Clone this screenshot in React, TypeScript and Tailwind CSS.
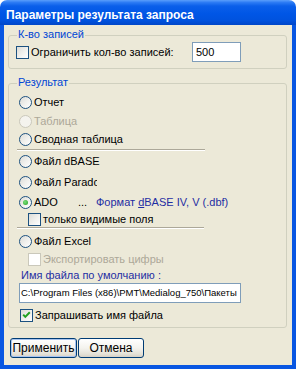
import React from "react";

function CheckBox({ checked = false, disabled = false }: { checked?: boolean; disabled?: boolean }) {
  return (
    <span
      className={
        disabled
          ? "relative flex h-[13px] w-[13px] shrink-0 border border-[#CAC8BB] bg-white"
          : "relative flex h-[13px] w-[13px] shrink-0 border border-[#1C5180] bg-[linear-gradient(135deg,#DCDCD7_0%,#F1F1EE_55%,#FFFFFF_100%)]"
      }
    >
      {checked && (
        <svg width="11" height="11" viewBox="0 0 11 11" className="absolute left-0 top-0">
          <path d="M2.2 4.6 L4.3 6.9 L8.8 2.3" stroke="#21A121" strokeWidth="2" fill="none" />
        </svg>
      )}
    </span>
  );
}

function Radio({ checked = false, disabled = false }: { checked?: boolean; disabled?: boolean }) {
  return (
    <span
      className={
        disabled
          ? "flex h-[13px] w-[13px] shrink-0 items-center justify-center rounded-full border border-[#CAC8BB] bg-[#F4F3EE]"
          : "flex h-[13px] w-[13px] shrink-0 items-center justify-center rounded-full border border-[#1C5180] bg-[linear-gradient(135deg,#DCDCD7_0%,#F1F1EE_55%,#FFFFFF_100%)]"
      }
    >
      {checked && (
        <span className="h-[5px] w-[5px] rounded-full bg-[radial-gradient(circle_at_40%_40%,#7BE07B_0%,#21A121_100%)]" />
      )}
    </span>
  );
}

export default function App() {
  return (
    <div className="h-[369px] w-[296px] bg-white font-['Liberation_Sans',Arial,sans-serif] text-[11px] text-black">
      <div className="flex h-[25px] items-start rounded-t-[7px] bg-[linear-gradient(180deg,#5A9EFB_0%,#2C7BF4_10%,#0A5FEA_24%,#0056E6_55%,#0052DE_82%,#0046C8_100%)] pl-[6px] pt-[8px]">
        <span className="text-[12px] font-bold leading-[14px] text-white">Параметры результата запроса</span>
      </div>
      <div className="flex h-[344px] flex-col bg-[#0856E2] px-[4px] pb-[4px]">
        <div className="flex h-[340px] flex-col bg-[#ECE9D8] pl-[4px] pr-[5px]">
          {/* Group 1 */}
          <div className="relative mt-[10px] flex h-[34px] items-center rounded-[3px] border border-[#D0D0BF] pl-[7px]">
            <span className="absolute left-[8px] top-[-8px] bg-[#ECE9D8] px-[1px] leading-[12px] text-[#0046D5]">
              К-во записей
            </span>
            <CheckBox />
            <span className="ml-[2px] w-[161px] whitespace-nowrap">Ограничить кол-во записей:</span>
            <div className="flex h-[20px] w-[49px] items-center border border-[#7F9DB9] bg-white pl-[3px]">500</div>
          </div>

          {/* Group 2 */}
          <div className="relative mt-[14px] flex flex-col rounded-[3px] border border-[#D0D0BF] pb-[3px] pt-[9px]">
            <span className="absolute left-[8px] top-[-8px] bg-[#ECE9D8] px-[1px] leading-[12px] text-[#0046D5]">
              Результат
            </span>
            <div className="ml-[10px] flex h-[18px] items-center">
              <Radio />
              <span className="ml-[2px]">Отчет</span>
            </div>
            <div className="ml-[10px] mt-[1px] flex h-[18px] items-center">
              <Radio disabled />
              <span className="ml-[2px] text-[#ACA899]">Таблица</span>
            </div>
            <div className="ml-[10px] flex h-[18px] items-center">
              <Radio />
              <span className="ml-[2px]">Сводная таблица</span>
            </div>
            <div className="ml-[8px] mt-[1px] h-[2px] w-[188px] border-b border-t border-b-white border-t-[#ACA899]" />
            <div className="ml-[10px] mt-[1px] flex h-[18px] items-center">
              <Radio />
              <span className="ml-[2px]">Файл dBASE</span>
            </div>
            <div className="ml-[10px] mt-[3px] flex h-[18px] items-center">
              <Radio />
              <span className="ml-[2px] w-[63px] overflow-hidden whitespace-nowrap">Файл Paradox</span>
            </div>
            <div className="ml-[10px] mt-[2px] flex h-[18px] items-center">
              <Radio checked />
              <span className="ml-[2px] w-[44px]">ADO</span>
              <span className="w-[18px]">...</span>
              <span className="whitespace-nowrap text-[#1F2EA3]">
                Формат <span className="underline">d</span>BASE IV, V (.dbf)
              </span>
            </div>
            <div className="ml-[19px] flex h-[16px] items-center">
              <CheckBox />
              <span className="ml-[2px]">только видимые поля</span>
            </div>
            <div className="ml-[8px] h-[2px] w-[187px] border-b border-t border-b-white border-t-[#ACA899]" />
            <div className="ml-[10px] mt-[3px] flex h-[18px] items-center">
              <Radio />
              <span className="ml-[2px]">Файл Excel</span>
            </div>
            <div className="ml-[19px] flex h-[18px] items-center">
              <CheckBox disabled />
              <span className="ml-[2px] text-[#ACA899]">Экспортировать цифры</span>
            </div>
            <div className="ml-[12px] h-[14px] leading-[14px] text-[#1F2EA3]">Имя файла по умолчанию :</div>
            <div className="ml-[10px] mt-[1px] flex h-[20px] w-[222px] items-center overflow-hidden whitespace-nowrap border border-[#7F9DB9] bg-white pl-[1px] text-[9.5px]">
              C:\Program Files (x86)\PMT\Medialog_750\Пакеты
            </div>
            <div className="ml-[11px] mt-[3px] flex h-[18px] items-center">
              <CheckBox checked />
              <span className="ml-[2px]">Запрашивать имя файла</span>
            </div>
          </div>

          {/* Buttons */}
          <div className="mt-[10px] flex">
            <button className="ml-[2px] flex h-[20px] w-[67px] items-center justify-center rounded-[3px] border border-[#003C74] bg-[linear-gradient(180deg,#FFFFFF_0%,#F4F3EE_50%,#E3E0D6_85%,#D6D0C5_100%)] text-[12px] shadow-[inset_0_0_0_1px_#A8C4EF]">
              Применить
            </button>
            <button className="ml-[1px] flex h-[20px] w-[66px] items-center justify-center rounded-[3px] border border-[#003C74] bg-[linear-gradient(180deg,#FFFFFF_0%,#F4F3EE_50%,#E3E0D6_85%,#D6D0C5_100%)] text-[12px]">
              Отмена
            </button>
          </div>
        </div>
      </div>
    </div>
  );
}
